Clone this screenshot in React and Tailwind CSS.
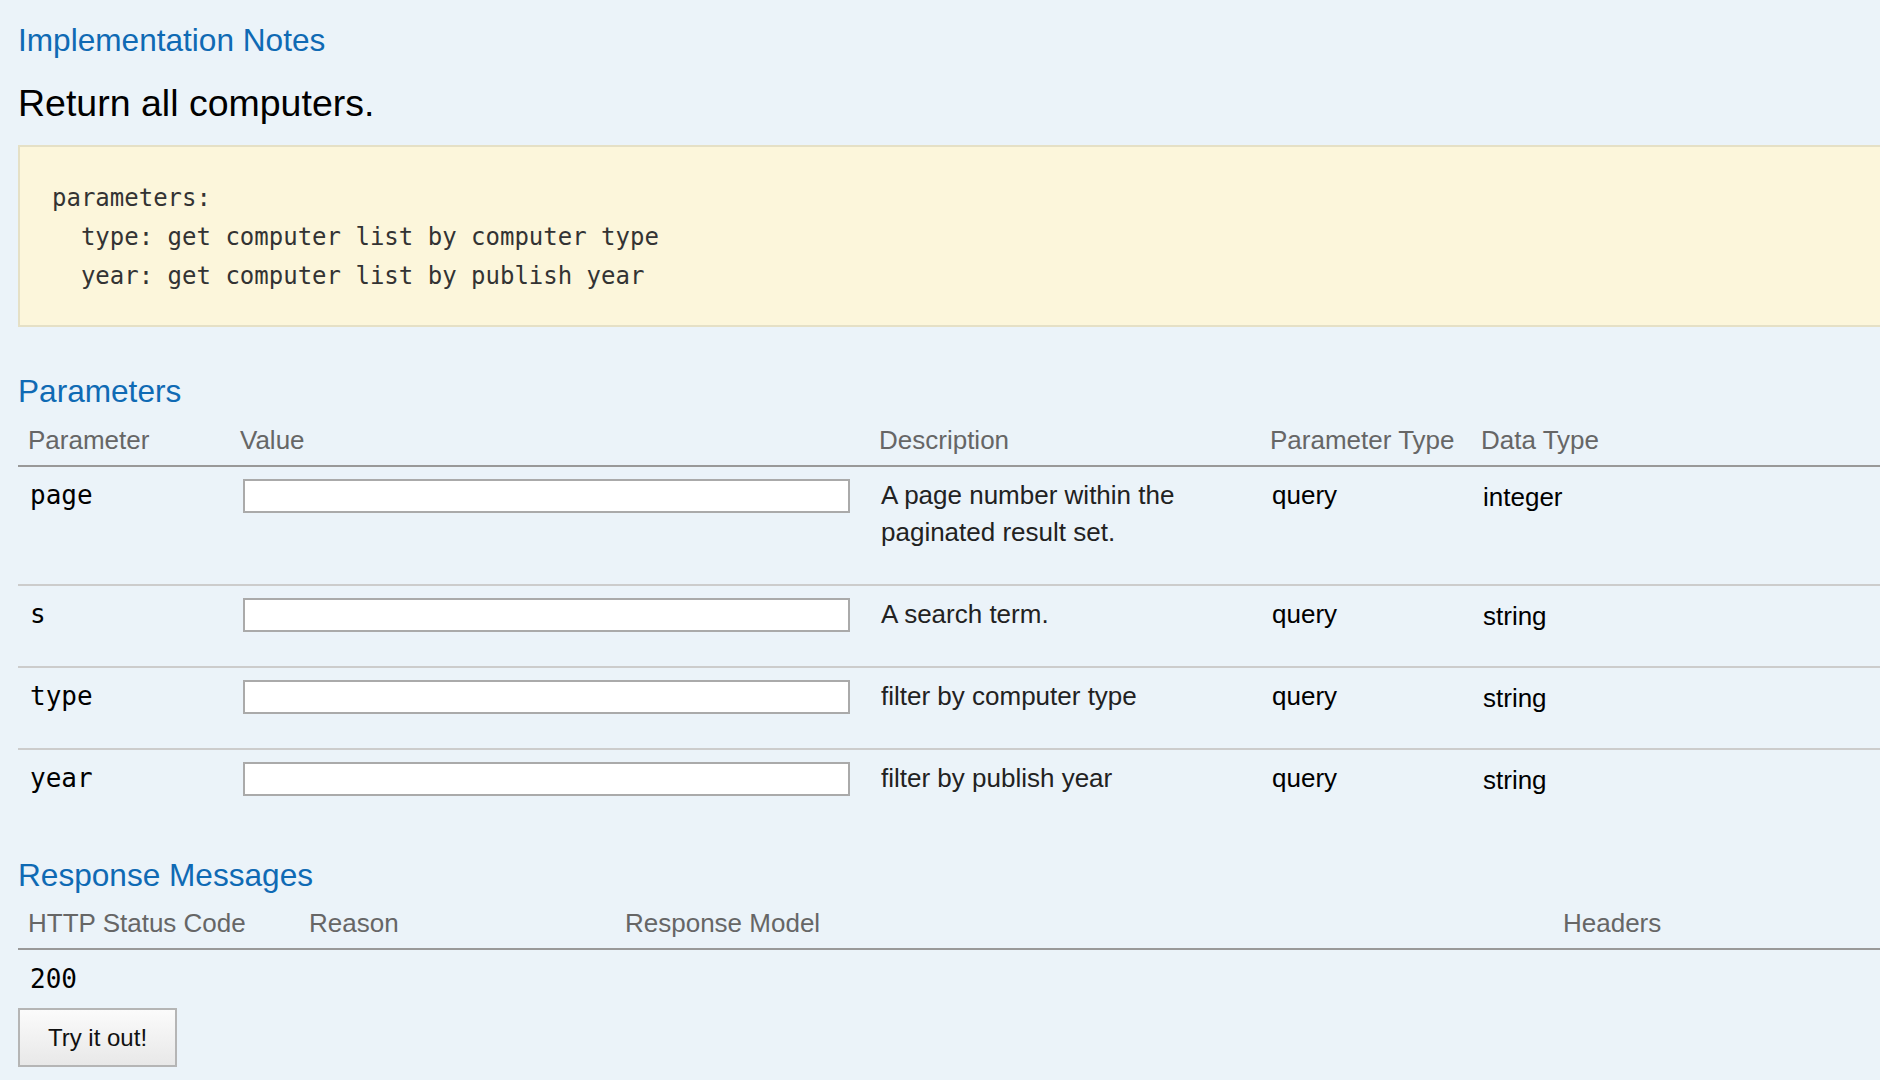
import { useState } from "react";

const params = [
  { name: "page", desc: "A page number within the paginated result set.", type: "query", dataType: "integer" },
  { name: "s", desc: "A search term.", type: "query", dataType: "string" },
  { name: "type", desc: "filter by computer type", type: "query", dataType: "string" },
  { name: "year", desc: "filter by publish year", type: "query", dataType: "string" },
];

const sans = "font-['Liberation_Sans',Arial,sans-serif]";
const mono = "font-['DejaVu_Sans_Mono',monospace]";

function SectionTitle({ children, className = "" }) {
  return (
    <h4 className={`text-[31.6px] leading-[36px] text-[#0f6ab4] ${className}`}>{children}</h4>
  );
}

export default function App() {
  const [values, setValues] = useState({});

  return (
    <div className={`min-h-screen w-full overflow-hidden bg-[#ebf3f9] ${sans}`}>
      <div className="w-[1920px] pl-[18px]">
        <SectionTitle className="pt-[22px]">Implementation Notes</SectionTitle>
        <p className="mt-[23px] text-[37.5px] leading-[44px] text-black">Return all computers.</p>

        <pre
          className={`mt-[20px] border-2 border-[#e5e0c6] bg-[#fcf6db] pt-[32px] pb-[29px] pl-[32px] text-[24px] leading-[39px] text-[#333] ${mono}`}
        >
{`parameters:
  type: get computer list by computer type
  year: get computer list by publish year`}
        </pre>

        <SectionTitle className="mt-[46px]">Parameters</SectionTitle>
        <table className="mt-[13px] w-[1900px] table-fixed text-[26px] leading-[37px]">
          <colgroup>
            <col className="w-[216px]" />
            <col className="w-[635px]" />
            <col className="w-[391px]" />
            <col className="w-[211px]" />
            <col />
          </colgroup>
          <thead>
            <tr className="text-left text-[#666]">
              <th className="border-b-2 border-[#999] pb-[7px] pl-[10px] font-normal leading-[36px]">Parameter</th>
              <th className="border-b-2 border-[#999] pb-[7px] pl-[6px] font-normal leading-[36px]">Value</th>
              <th className="border-b-2 border-[#999] pb-[7px] pl-[10px] font-normal leading-[36px]">Description</th>
              <th className="border-b-2 border-[#999] pb-[7px] pl-[10px] font-normal leading-[36px]">Parameter Type</th>
              <th className="border-b-2 border-[#999] pb-[7px] pl-[10px] font-normal leading-[36px]">Data Type</th>
            </tr>
          </thead>
          <tbody>
            {params.map((p, i) => {
              const border = i < params.length - 1 ? "border-b-2 border-[#ccc]" : "";
              return (
                <tr key={p.name} className="align-top text-black">
                  <td className={`${border} pt-[10px] pb-[33px] pl-[12px] ${mono}`}>{p.name}</td>
                  <td className={`${border} pt-[9px] pb-[34px] pl-[9px]`}>
                    <input
                      type="text"
                      value={values[p.name] || ""}
                      onChange={(e) => setValues({ ...values, [p.name]: e.target.value })}
                      className="mt-[3px] block h-[34px] w-[607px] border-2 border-[#aaa] bg-white px-2 text-[22px] outline-none"
                    />
                  </td>
                  <td className={`${border} pt-[10px] pb-[33px] pl-[12px] text-[#222]`}>{p.desc}</td>
                  <td className={`${border} pt-[10px] pb-[33px] pl-[12px]`}>{p.type}</td>
                  <td className={`${border} pt-[12px] pb-[31px] pl-[12px]`}>{p.dataType}</td>
                </tr>
              );
            })}
          </tbody>
        </table>

        <SectionTitle className="mt-[27px]">Response Messages</SectionTitle>
        <table className="mt-[12px] w-[1900px] table-fixed text-[26px] leading-[37px]">
          <colgroup>
            <col className="w-[281px]" />
            <col className="w-[316px]" />
            <col className="w-[938px]" />
            <col />
          </colgroup>
          <thead>
            <tr className="text-left text-[#666]">
              <th className="border-b-2 border-[#999] pb-[7px] pl-[10px] font-normal leading-[36px]">HTTP Status Code</th>
              <th className="border-b-2 border-[#999] pb-[7px] pl-[10px] font-normal leading-[36px]">Reason</th>
              <th className="border-b-2 border-[#999] pb-[7px] pl-[10px] font-normal leading-[36px]">Response Model</th>
              <th className="border-b-2 border-[#999] pb-[7px] pl-[10px] font-normal leading-[36px]">Headers</th>
            </tr>
          </thead>
          <tbody>
            <tr className="align-top text-black">
              <td className={`pt-[11px] pl-[12px] ${mono}`}>200</td>
              <td className="pt-[11px] pl-[10px]"></td>
              <td className="pt-[11px] pl-[10px]"></td>
              <td className="pt-[11px] pl-[10px]"></td>
            </tr>
          </tbody>
        </table>

        <button
          type="button"
          className="mt-[10px] h-[59px] w-[159px] border-2 border-[#b5b5b5] bg-linear-to-b from-[#fbfbfb] to-[#e8e8e8] text-[24px] text-[#111]"
        >
          Try it out!
        </button>
      </div>
    </div>
  );
}
